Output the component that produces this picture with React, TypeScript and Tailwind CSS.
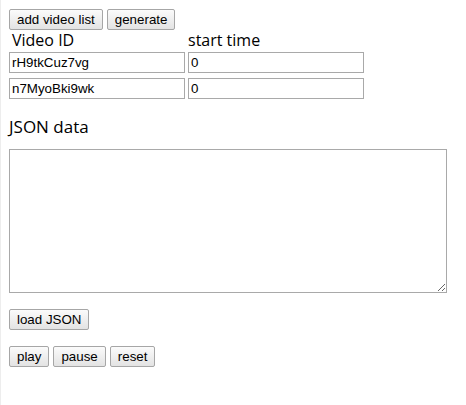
import React from 'react';

const btn =
  "h-[21px] px-[7px] border border-[#a6a6a6] rounded-[2px] bg-gradient-to-b from-[#fbfbfb] to-[#e3e3e3] text-[13.33px] leading-none text-black font-['Liberation_Sans',Arial,sans-serif]";

const field =
  "h-[21px] w-[176px] border border-[#a9a9a9] px-[2px] text-[13.33px] text-black font-['Liberation_Sans',Arial,sans-serif] outline-none";

const rows = [
  { id: 'rH9tkCuz7vg', start: '0' },
  { id: 'n7MyoBki9wk', start: '0' },
];

export default function App() {
  return (
    <div className="min-h-[405px] w-[466px] bg-white border-l border-[#ededed] pl-[8px] pt-[9px] font-['Open_Sans',sans-serif]">
      <div className="flex gap-[4px]">
        <button className={btn}>add video list</button>
        <button className={btn}>generate</button>
      </div>

      <div className="flex text-[16px] leading-[21px] text-black">
        <div className="w-[179px] pl-[3px]">Video ID</div>
        <div>start time</div>
      </div>

      <div className="flex flex-col gap-[5px] mt-[1px]">
        {rows.map((r) => (
          <div key={r.id} className="flex gap-[3px]">
            <input className={field} defaultValue={r.id} />
            <input className={`${field} w-[174px]`} defaultValue={r.start} />
          </div>
        ))}
      </div>

      <div className="mt-[16px] text-[17px] leading-[24px] text-black">JSON data</div>

      <textarea className="mt-[10px] block w-[438px] h-[144px] border border-[#a9a9a9] outline-none" />

      <div className="mt-[16px] flex">
        <button className={btn}>load JSON</button>
      </div>

      <div className="mt-[16px] flex gap-[4px]">
        <button className={btn}>play</button>
        <button className={btn}>pause</button>
        <button className={btn}>reset</button>
      </div>
    </div>
  );
}
